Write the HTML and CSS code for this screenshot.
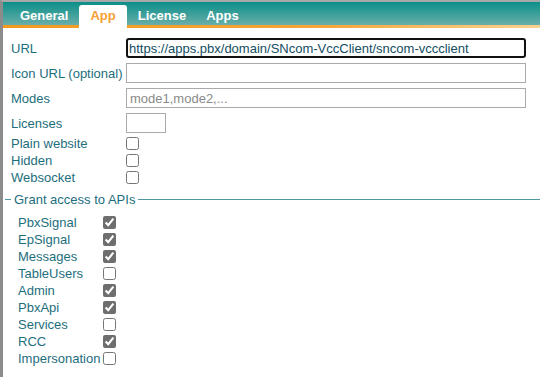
FILE: index.html
```html
<!DOCTYPE html>
<html>
<head>
<meta charset="utf-8">
<link rel="stylesheet" href="styles.css">
</head>
<body>
<div class="frame">
  <div class="tabbar">
    <span class="tab">General</span>
    <span class="tab active">App</span>
    <span class="tab lic">License</span>
    <span class="tab">Apps</span>
  </div>
  <div class="form">
    <div class="fields">
      <label class="lbl">URL</label>
      <input class="txt focus" type="text" value="https://apps.pbx/domain/SNcom-VccClient/sncom-vccclient">
      <label class="lbl">Icon URL (optional)</label>
      <input class="txt" type="text">
      <label class="lbl">Modes</label>
      <input class="txt" type="text" placeholder="mode1,mode2,...">
      <label class="lbl">Licenses</label>
      <input class="txt small" type="text">
    </div>
    <div class="checks">
      <label class="lbl">Plain website</label><input type="checkbox" class="cb">
      <label class="lbl">Hidden</label><input type="checkbox" class="cb">
      <label class="lbl">Websocket</label><input type="checkbox" class="cb">
    </div>
    <fieldset class="apis">
      <legend class="legend">Grant access to APIs</legend>
      <div class="apilist">
        <label class="lbl">PbxSignal</label><input type="checkbox" class="cb" checked>
        <label class="lbl">EpSignal</label><input type="checkbox" class="cb" checked>
        <label class="lbl">Messages</label><input type="checkbox" class="cb" checked>
        <label class="lbl">TableUsers</label><input type="checkbox" class="cb">
        <label class="lbl">Admin</label><input type="checkbox" class="cb" checked>
        <label class="lbl">PbxApi</label><input type="checkbox" class="cb" checked>
        <label class="lbl">Services</label><input type="checkbox" class="cb">
        <label class="lbl">RCC</label><input type="checkbox" class="cb" checked>
        <label class="lbl">Impersonation</label><input type="checkbox" class="cb">
      </div>
    </fieldset>
  </div>
</div>
</body>
</html>
```
FILE: styles.css
```css
html, body {
  margin: 0;
  padding: 0;
  background: #fff;
  height: 100%;
}
body {
  font-family: "Liberation Sans", Arial, sans-serif;
  font-size: 13px;
  overflow: hidden;
}
.frame {
  border-top: 2px solid #a8a8a8;
  border-left: 3px solid #8c8c8c;
  min-height: 377px;
  box-sizing: border-box;
}
.tabbar {
  display: flex;
  align-items: flex-end;
  height: 23px;
  padding-left: 6px;
  background: linear-gradient(#0b8f89, #6aaea9);
  border-bottom: 3px solid #f29a21;
  border-image: linear-gradient(to right, #f29a20 0%, #f4a63a 60%, #fbd290 100%) 1;
}
.tab {
  font-weight: bold;
  color: #fff;
  padding: 0 11px;
  height: 20px;
  line-height: 22px;
}
.tab.lic { padding-right: 9px; }
.tab.active {
  background: #fff;
  color: #f6a035;
  border-radius: 3px 3px 0 0;
  margin-bottom: -3px;
  height: 23px;
}
.form {
  padding: 10px 0 0 8px;
}
.lbl {
  color: #1d6e7d;
  white-space: nowrap;
}
.fields {
  display: grid;
  grid-template-columns: 115px 400px;
  row-gap: 5px;
  align-items: center;
}
.txt {
  font-family: "Liberation Sans", Arial, sans-serif;
  font-size: 13px;
  height: 20px;
  box-sizing: border-box;
  border: 1px solid #aaa;
  margin: 0;
  padding: 0 3px;
  color: #1d5e6d;
  outline: none;
}
.txt::placeholder { color: #8a8a8a; }
.txt.focus {
  border: 2px solid #111;
  border-radius: 3px;
  padding: 0 1px;
  color: #134e62;
}
.txt.small { width: 40px; }
.checks {
  display: grid;
  grid-template-columns: 115px 13px;
  grid-auto-rows: 17px;
  align-items: center;
  margin-top: 2px;
}
.cb {
  width: 13px;
  height: 13px;
  margin: 0;
  accent-color: #6e6e6e;
}
.apis {
  margin: 6px 0 0 -6px;
  padding: 0 0 0 6px;
  border: none;
  border-top: 1px solid #4f98a0;
}
.legend {
  color: #1d6e7d;
  padding: 0 3px;
  font-size: 13px;
}
.apilist {
  display: grid;
  grid-template-columns: 85px 13px;
  grid-auto-rows: 17px;
  align-items: center;
  margin: 7px 0 0 7px;
}
```
